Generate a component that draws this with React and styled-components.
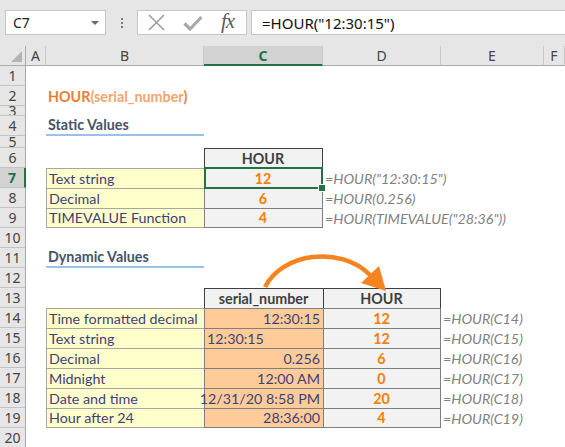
import React from 'react';
import styled, { createGlobalStyle } from 'styled-components';

const green = '#217346';
const orange = '#FA7D00';
const navy = '#3F3F76';
const cellFont = "'Lato', 'Liberation Sans', sans-serif";
const uiFont = "'Noto Sans', 'Liberation Sans', sans-serif";

const GlobalStyle = createGlobalStyle`
  html, body {
    margin: 0;
    padding: 0;
    background: #fff;
    overflow: hidden;
  }
`;

const Page = styled.div`
  position: relative;
  width: 565px;
  height: 447px;
  overflow: hidden;
  background: #fff;
`;

const Toolbar = styled.div`
  display: flex;
  align-items: flex-start;
  height: 46px;
  box-sizing: border-box;
  padding: 10px 0 0 5px;
  background: #e6e6e6;
`;

const NameBox = styled.div`
  display: flex;
  align-items: center;
  justify-content: space-between;
  box-sizing: border-box;
  width: 101px;
  height: 25px;
  padding: 0 6px 0 7px;
  background: #fff;
  border: 1px solid #c6c6c6;
  font: 14px ${uiFont};
  color: #222;
`;

const Caret = styled.span`
  width: 0;
  height: 0;
  border-left: 4px solid transparent;
  border-right: 4px solid transparent;
  border-top: 4px solid #6b6b6b;
`;

const Grip = styled.div`
  display: flex;
  flex-direction: column;
  align-items: center;
  justify-content: center;
  gap: 2px;
  width: 31px;
  height: 25px;
  & > i {
    width: 2px;
    height: 2px;
    background: #7a7a7a;
  }
`;

const FxBox = styled.div`
  display: flex;
  align-items: center;
  box-sizing: border-box;
  width: 110px;
  height: 25px;
  padding-left: 10px;
  gap: 18px;
  background: #fff;
  border: 1px solid #c6c6c6;
`;

const FxLabel = styled.span`
  font: italic 21px 'Liberation Serif', serif;
  color: #5a5a5a;
  letter-spacing: -1px;
  margin-top: -3px;
`;

const FormulaInput = styled.div`
  flex: 1;
  display: flex;
  align-items: center;
  box-sizing: border-box;
  height: 25px;
  margin-left: 4px;
  padding-left: 10px;
  background: #fff;
  border: 1px solid #c6c6c6;
  border-right: none;
  font: 15px ${uiFont};
  color: #111;
`;

const Sheet = styled.div`
  display: grid;
  grid-template-columns: 26px 20px 158px 119px 118px 103px 1fr;
  grid-template-rows: 20px 20px 20px 10px 20px 12px repeat(15, 20px);
  font: 14.3px ${cellFont};
`;

const ColHead = styled.div`
  display: flex;
  align-items: center;
  justify-content: center;
  box-sizing: border-box;
  background: ${(p) => (p.$active ? '#d2d2d2' : '#e6e6e6')};
  border-right: 1px solid #c8c8c8;
  border-bottom: ${(p) => (p.$active ? `2px solid ${green}` : '1px solid #ababab')};
  color: ${(p) => (p.$active ? green : '#444')};
  font: ${(p) => (p.$active ? 700 : 400)} 14px ${uiFont};
`;

const Corner = styled.div`
  position: relative;
  box-sizing: border-box;
  background: #e6e6e6;
  border-right: 1px solid #ababab;
  border-bottom: 1px solid #ababab;
  &::after {
    content: '';
    position: absolute;
    right: 3px;
    bottom: 3px;
    border-left: 11px solid transparent;
    border-bottom: 11px solid #b4b4b4;
  }
`;

const RowHead = styled.div`
  display: flex;
  align-items: center;
  justify-content: center;
  overflow: hidden;
  box-sizing: border-box;
  background: ${(p) => (p.$active ? '#d2d2d2' : '#e6e6e6')};
  border-bottom: 1px solid #c3c3c3;
  border-right: ${(p) => (p.$active ? `2px solid ${green}` : '1px solid #ababab')};
  color: ${(p) => (p.$active ? green : '#444')};
  font: ${(p) => (p.$active ? 700 : 400)} 14px ${uiFont};
  line-height: 1;
`;

const Cell = styled.div`
  position: relative;
  display: flex;
  align-items: flex-end;
  justify-content: ${(p) =>
    p.$align === 'right' ? 'flex-end' : p.$align === 'center' ? 'center' : 'flex-start'};
  box-sizing: border-box;
  padding: 0 3px 1px 2px;
  white-space: nowrap;
  background: ${(p) => p.$bg || 'transparent'};
  color: ${(p) => p.$color || '#000'};
  font-weight: ${(p) => (p.$bold ? 700 : 400)};
  font-style: ${(p) => (p.$italic ? 'italic' : 'normal')};
  border-top: ${(p) => (p.$bt ? `1px solid ${p.$bt}` : 'none')};
  border-left: ${(p) => (p.$bl ? `1px solid ${p.$bl}` : 'none')};
  border-right: ${(p) => (p.$br ? `1px solid ${p.$br}` : 'none')};
  border-bottom: ${(p) => (p.$bb ? `${p.$bbw || 1}px solid ${p.$bb}` : 'none')};
  ${(p) =>
    p.$selected &&
    `
    &::after {
      content: '';
      position: absolute;
      left: -1px;
      top: -2px;
      right: -1px;
      bottom: -1px;
      border: 2px solid ${green};
      z-index: 2;
    }
    &::before {
      content: '';
      position: absolute;
      right: -4px;
      bottom: -4px;
      width: 6px;
      height: 6px;
      background: ${green};
      border: 1px solid #fff;
      z-index: 3;
    }
  `}
`;

const Dark = styled.span`
  color: #ed7d31;
`;

const Light = styled.span`
  color: #f4a46c;
`;

const Arrow = styled.svg`
  position: absolute;
  left: 0;
  top: 0;
  pointer-events: none;
`;

// Excel cell styles used in the sheet
const kinds = {
  note: { $bg: '#FFFFCC', $color: navy, border: '#a6a6a6' },
  calc: { $bg: '#F2F2F2', $color: orange, $bold: true, $align: 'center', border: '#7f7f7f' },
  input: { $bg: '#FFCC99', $color: navy, $align: 'right', border: '#7f7f7f' },
  output: { $bg: '#F2F2F2', $color: '#3F3F3F', $bold: true, $align: 'center', border: '#3f3f3f' },
  formula: { $color: '#7f7f7f', $italic: true },
  heading: { $color: '#44546A', $bold: true, $bb: '#9BC2E6', $bbw: 2 },
  title: { $bold: true },
};

const cols = ['A', 'B', 'C', 'D', 'E', 'F'];

const rows = [
  { n: 1 },
  { n: 2, B: { kind: 'title', text: (<><Dark>HOUR</Dark><Light>(serial_number</Light><Dark>)</Dark></>) } },
  { n: 3 },
  { n: 4, B: { kind: 'heading', text: 'Static Values' } },
  { n: 5 },
  { n: 6, C: { kind: 'output', text: 'HOUR' } },
  { n: 7, B: { kind: 'note', text: 'Text string' }, C: { kind: 'calc', text: '12', selected: true }, D: { kind: 'formula', text: '=HOUR("12:30:15")' } },
  { n: 8, B: { kind: 'note', text: 'Decimal' }, C: { kind: 'calc', text: '6' }, D: { kind: 'formula', text: '=HOUR(0.256)' } },
  { n: 9, B: { kind: 'note', text: 'TIMEVALUE Function' }, C: { kind: 'calc', text: '4' }, D: { kind: 'formula', text: '=HOUR(TIMEVALUE("28:36"))' } },
  { n: 10 },
  { n: 11, B: { kind: 'heading', text: 'Dynamic Values' } },
  { n: 12 },
  { n: 13, C: { kind: 'output', text: 'serial_number' }, D: { kind: 'output', text: 'HOUR' } },
  { n: 14, B: { kind: 'note', text: 'Time formatted decimal' }, C: { kind: 'input', text: '12:30:15' }, D: { kind: 'calc', text: '12' }, E: { kind: 'formula', text: '=HOUR(C14)' } },
  { n: 15, B: { kind: 'note', text: 'Text string' }, C: { kind: 'input', text: '12:30:15', align: 'left' }, D: { kind: 'calc', text: '12' }, E: { kind: 'formula', text: '=HOUR(C15)' } },
  { n: 16, B: { kind: 'note', text: 'Decimal' }, C: { kind: 'input', text: '0.256' }, D: { kind: 'calc', text: '6' }, E: { kind: 'formula', text: '=HOUR(C16)' } },
  { n: 17, B: { kind: 'note', text: 'Midnight' }, C: { kind: 'input', text: '12:00 AM' }, D: { kind: 'calc', text: '0' }, E: { kind: 'formula', text: '=HOUR(C17)' } },
  { n: 18, B: { kind: 'note', text: 'Date and time' }, C: { kind: 'input', text: '12/31/20 8:58 PM' }, D: { kind: 'calc', text: '20' }, E: { kind: 'formula', text: '=HOUR(C18)' } },
  { n: 19, B: { kind: 'note', text: 'Hour after 24' }, C: { kind: 'input', text: '28:36:00' }, D: { kind: 'calc', text: '4' }, E: { kind: 'formula', text: '=HOUR(C19)' } },
  { n: 20 },
];

const boxed = (cell) => cell && kinds[cell.kind].border;

const cellProps = (row, ri, col, ci) => {
  const cell = row[col];
  if (!cell) return {};
  const { border, ...style } = kinds[cell.kind];
  const props = { ...style };
  if (cell.align) props.$align = cell.align;
  if (border) {
    props.$bt = border;
    props.$bl = border;
    if (!boxed(row[cols[ci + 1]])) props.$br = border;
    if (!boxed(rows[ri + 1] && rows[ri + 1][col])) props.$bb = border;
  }
  if (cell.selected) props.$selected = true;
  return props;
};

const XIcon = () => (
  <svg width="17" height="17" viewBox="0 0 17 17">
    <path d="M1 1L16 16M16 1L1 16" stroke="#9d9d9d" strokeWidth="1.6" fill="none" />
  </svg>
);

const CheckIcon = () => (
  <svg width="20" height="16" viewBox="0 0 20 16">
    <path d="M1.5 8.5L7 14L18.5 2" stroke="#a9a9a9" strokeWidth="3.2" fill="none" />
  </svg>
);

const App = () => {
  return (
    <Page>
      <GlobalStyle />
      <Toolbar>
        <NameBox>
          C7
          <Caret />
        </NameBox>
        <Grip>
          <i />
          <i />
          <i />
        </Grip>
        <FxBox>
          <XIcon />
          <CheckIcon />
          <FxLabel>fx</FxLabel>
        </FxBox>
        <FormulaInput>=HOUR("12:30:15")</FormulaInput>
      </Toolbar>
      <Sheet>
        <Corner />
        {cols.map((c) => (
          <ColHead key={c} $active={c === 'C'}>{c}</ColHead>
        ))}
        {rows.map((row, ri) => (
          <React.Fragment key={row.n}>
            <RowHead $active={row.n === 7}>{row.n}</RowHead>
            {cols.map((col, ci) => (
              <Cell key={col} {...cellProps(row, ri, col, ci)}>
                {row[col] && row[col].text}
              </Cell>
            ))}
          </React.Fragment>
        ))}
      </Sheet>
      <Arrow width="565" height="447" viewBox="0 0 565 447">
        <path d="M265 287C282 253 340 245 370 275" stroke="#F7831F" strokeWidth="4.5" fill="none" />
        <polygon points="361,283 379,266 386,291" fill="#F7831F" />
      </Arrow>
    </Page>
  );
};

export default App;
